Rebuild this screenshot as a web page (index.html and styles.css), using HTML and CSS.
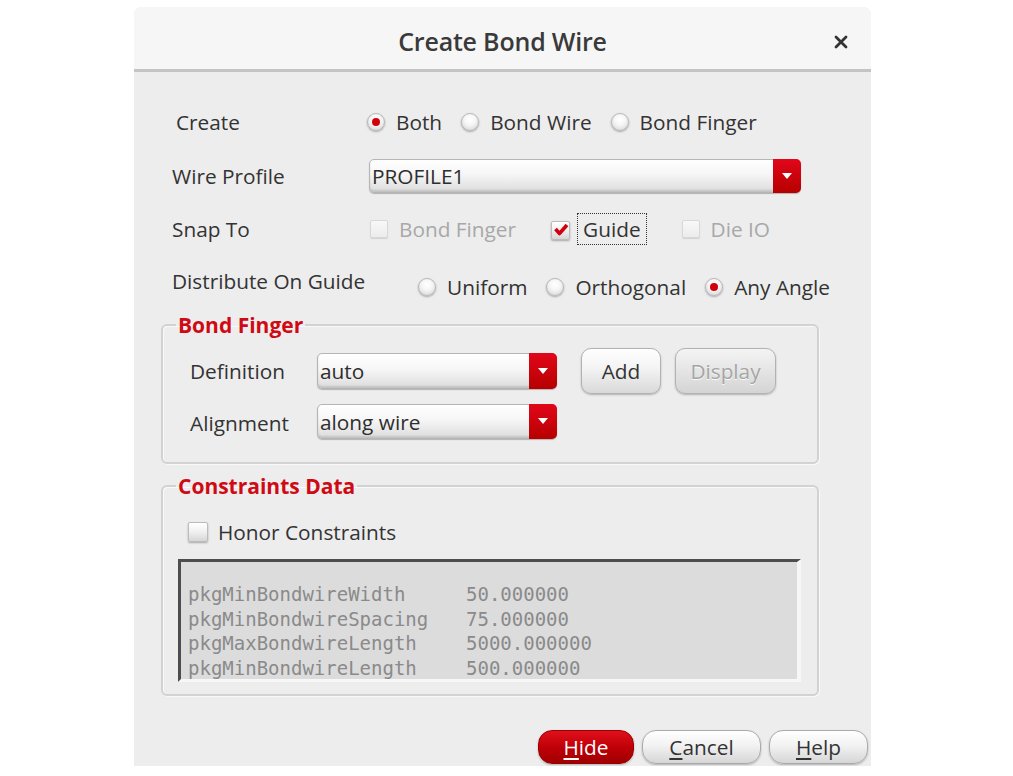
FILE: index.html
```html
<!DOCTYPE html>
<html>
<head>
<meta charset="utf-8">
<link rel="stylesheet" href="styles.css">
</head>
<body>
<div class="dialog">
  <div class="titlebar">
    <span class="title">Create Bond Wire</span>
    <svg class="close" width="14" height="14" viewBox="0 0 14 14"><path d="M2 2 L12 12 M12 2 L2 12" stroke="#333" stroke-width="2.8" stroke-linecap="round"/></svg>
  </div>
  <div class="content">
    <div class="row r-create">
      <span class="label">Create</span>
      <div class="opts">
        <span class="opt"><span class="radio on"></span>Both</span>
        <span class="opt"><span class="radio"></span>Bond Wire</span>
        <span class="opt"><span class="radio"></span>Bond Finger</span>
      </div>
    </div>
    <div class="row r-profile">
      <span class="label">Wire Profile</span>
      <div class="combo combo-wide"><span class="val">PROFILE1</span><span class="arrow"></span></div>
    </div>
    <div class="row r-snap">
      <span class="label">Snap To</span>
      <div class="opts">
        <span class="opt chk-opt disabled"><span class="check"></span>Bond Finger</span>
        <span class="opt chk-opt chk-guide"><span class="check on"><svg width="16" height="14" viewBox="0 0 16 14"><path d="M2.5 6 L6.5 10.5 L14 2" fill="none" stroke="#d30010" stroke-width="3.6" stroke-linejoin="round"/></svg></span><span class="focus">Guide</span></span>
        <span class="opt chk-opt disabled"><span class="check"></span>Die IO</span>
      </div>
    </div>
    <div class="row r-dist">
      <span class="label">Distribute On Guide</span>
      <div class="opts">
        <span class="opt"><span class="radio"></span>Uniform</span>
        <span class="opt"><span class="radio"></span>Orthogonal</span>
        <span class="opt"><span class="radio on"></span>Any Angle</span>
      </div>
    </div>

    <fieldset class="group g-finger">
      <legend>Bond Finger</legend>
      <div class="frow frow-a">
        <span class="flabel">Definition</span>
        <div class="combo combo-small"><span class="val">auto</span><span class="arrow"></span></div>
        <span class="btn btn-add">Add</span>
        <span class="btn btn-display">Display</span>
      </div>
      <div class="frow frow-b">
        <span class="flabel">Alignment</span>
        <div class="combo combo-small combo-b"><span class="val">along wire</span><span class="arrow"></span></div>
      </div>
    </fieldset>

    <fieldset class="group g-cons">
      <legend>Constraints Data</legend>
      <div class="honor"><span class="check"></span>Honor Constraints</div>
      <div class="data">
        <div class="drow"><span class="k">pkgMinBondwireWidth</span><span>50.000000</span></div>
        <div class="drow"><span class="k">pkgMinBondwireSpacing</span><span>75.000000</span></div>
        <div class="drow"><span class="k">pkgMaxBondwireLength</span><span>5000.000000</span></div>
        <div class="drow"><span class="k">pkgMinBondwireLength</span><span>500.000000</span></div>
      </div>
    </fieldset>

    <div class="buttons">
      <span class="pbtn hide"><u>H</u>ide</span>
      <span class="pbtn cancel"><u>C</u>ancel</span>
      <span class="pbtn help"><u>H</u>elp</span>
    </div>
  </div>
</div>
</body>
</html>
```

FILE: styles.css
```css
html, body {
  margin: 0;
  padding: 0;
  background: #ffffff;
}
body {
  font-family: "Open Sans", "Noto Sans", sans-serif;
  color: #333333;
  font-size: 20.8px;
}
.dialog {
  margin-left: 134px;
  margin-top: 7px;
  width: 737px;
  background: #ededed;
  border-radius: 8px 8px 0 0;
}
.titlebar {
  height: 62px;
  background: #f6f6f6;
  border-radius: 8px 8px 0 0;
  border-bottom: 3px solid #c4c4c4;
  display: flex;
  align-items: center;
  justify-content: center;
  position: relative;
}
.title {
  font-size: 25px;
  font-weight: 600;
  color: #3a3a3a;
  letter-spacing: -0.2px;
  margin-top: 6px;
}
.close {
  position: absolute;
  right: 23px;
  top: 28px;
}
.content {
  padding: 32px 3px 2px 0;
}
.row {
  display: flex;
  align-items: center;
  height: 36px;
  padding-left: 38px;
}
.label {
  width: 197px;
  flex: none;
}
.r-create .label {
  padding-left: 4px;
  width: 193px;
}
.opts {
  display: flex;
  align-items: center;
}
.opt {
  display: inline-flex;
  align-items: center;
  gap: 11px;
  margin-right: 19px;
}
.r-create .opts { margin-left: -2px; }
.radio {
  width: 16px;
  height: 16px;
  border-radius: 50%;
  border: 1px solid #b8b8b8;
  background: radial-gradient(circle at 50% 35%, #ffffff 0%, #f6f6f6 40%, #d2d2d2 100%);
  box-shadow: 0 1px 2px rgba(0,0,0,0.3);
  display: flex;
  align-items: center;
  justify-content: center;
  flex: none;
}
.radio.on::after {
  content: "";
  width: 8px;
  height: 8px;
  border-radius: 50%;
  background: #d0000d;
}
.r-profile {
  margin-top: 19px;
  height: 34px;
}
.combo {
  display: flex;
  border: 1px solid #b5b5b5;
  border-radius: 5px;
  background: linear-gradient(#ffffff, #f6f6f6 45%, #dcdcdc);
  box-shadow: inset 0 -2px 2px rgba(0,0,0,0.12), 0 1px 1px rgba(0,0,0,0.25);
  box-sizing: border-box;
}
.combo-wide {
  width: 432px;
  height: 34px;
}
.combo .val {
  flex: 1;
  padding-left: 2px;
  line-height: 32px;
  color: #2e2e2e;
}
.combo .arrow {
  width: 28px;
  margin: -1px -1px -1px 0;
  border-radius: 0 5px 5px 0;
  background: linear-gradient(#e2061a, #b50000);
  display: flex;
  align-items: center;
  justify-content: center;
}
.combo .arrow::after {
  content: "";
  border-left: 5px solid transparent;
  border-right: 5px solid transparent;
  border-top: 6px solid #ffffff;
}
.r-snap {
  margin-top: 19px;
  height: 34px;
}
.r-snap .opts { margin-left: 1px; }
.chk-opt { gap: 11px; margin-right: 35px; }
.check {
  width: 18px;
  height: 18px;
  box-sizing: border-box;
  border: 1px solid #bcbcbc;
  border-radius: 2px;
  background: linear-gradient(#ffffff, #f0f0f0 50%, #d6d6d6);
  box-shadow: 0 1px 2px rgba(0,0,0,0.3);
  display: flex;
  align-items: center;
  justify-content: center;
  flex: none;
}
.disabled { color: #a8a8a8; }
.disabled .check {
  border-color: #d8d8d8;
  background: linear-gradient(#f8f8f8, #ececec);
  box-shadow: 0 1px 1px rgba(0,0,0,0.12);
}
.chk-guide .check.on {
  width: 19px;
  height: 19px;
  margin-top: 2px;
}
.chk-guide { gap: 7px; margin-right: 35px; }
.focus {
  border: 1px dotted #333;
  padding: 0 5px;
  line-height: 30px;
}
.r-dist {
  margin-top: 17px;
  height: 40px;
  align-items: flex-start;
}
.r-dist .label { line-height: 36px; }
.r-dist .opts {
  margin-left: 49px;
  padding-top: 6px;
  height: 36px;
}
.r-dist .opt { margin-right: 19px; }

.group {
  margin: 9px 0 0 27px;
  width: 658px;
  box-sizing: border-box;
  border: 2px solid #d2d2d2;
  border-radius: 6px;
  padding: 0;
  box-shadow: inset 1px 1px 0 #f9f9f9, 1px 1px 0 #f9f9f9;
}
.group legend {
  color: #cf0a14;
  font-weight: 700;
  font-size: 21px;
  line-height: 26px;
  padding: 0 2px;
}
.g-finger { padding: 9px 0 23px 27px; }
.g-finger legend { margin-left: -14px; }
.frow {
  display: flex;
  align-items: center;
}
.frow-a { height: 48px; }
.frow-b { height: 36px; margin-top: 8px; }
.flabel { width: 127px; flex: none; }
.frow-b .flabel { padding-top: 4px; }
.combo-small {
  width: 240px;
  height: 36px;
}
.combo-small .val { line-height: 34px; }
.combo-b { height: 35px; }
.btn {
  height: 46px;
  box-sizing: border-box;
  border: 1px solid #b2b2b2;
  border-radius: 10px;
  background: linear-gradient(#ffffff, #f3f3f3 45%, #d9d9d9);
  box-shadow: 0 1px 2px rgba(0,0,0,0.25);
  display: flex;
  align-items: center;
  justify-content: center;
  color: #333;
}
.btn-add { width: 80px; margin-left: 24px; }
.btn-display {
  width: 101px;
  margin-left: 14px;
  color: #a5a5a5;
  background: linear-gradient(#f4f4f4, #e6e6e6 45%, #d4d4d4);
  text-shadow: 0 1px 0 #fafafa;
}

.g-cons { margin-top: 9px; padding: 18px 0 12px 15px; }
.g-cons legend { margin-left: -2px; }
.honor {
  display: flex;
  align-items: center;
  gap: 10px;
  height: 30px;
  padding-left: 10px;
}
.honor .check { width: 20px; height: 20px; }
.data {
  margin-top: 12px;
  width: 623px;
  height: 123px;
  box-sizing: border-box;
  border-top: 3px solid #4d4d4d;
  border-left: 3px solid #4d4d4d;
  border-right: 4px solid #f7f7f7;
  border-bottom: 3px solid #f7f7f7;
  background: #dcdcdc;
  overflow: hidden;
  padding: 20px 0 0 7px;
  font-family: "DejaVu Sans Mono", monospace;
  font-size: 19px;
  line-height: 24.7px;
  color: #8a8a8a;
}
.drow { display: flex; white-space: pre; }
.drow .k { width: 278px; flex: none; }

.buttons {
  display: flex;
  justify-content: flex-end;
  gap: 8px;
  margin-top: 34px;
}
.pbtn {
  height: 34px;
  box-sizing: border-box;
  border-radius: 14px;
  border: 1px solid #aaaaaa;
  background: linear-gradient(#ffffff, #f2f2f2 45%, #d6d6d6);
  box-shadow: 0 1px 2px rgba(0,0,0,0.25);
  display: flex;
  align-items: center;
  justify-content: center;
  font-size: 20.8px;
  color: #333;
}
.pbtn u { text-underline-offset: 3px; text-decoration-thickness: 1.5px; }
.hide {
  width: 96px;
  color: #ffffff;
  background: linear-gradient(#e0101c, #c00008 50%, #a00000);
  border-color: #9a0000;
}
.cancel { width: 119px; }
.help { width: 99px; }
```
